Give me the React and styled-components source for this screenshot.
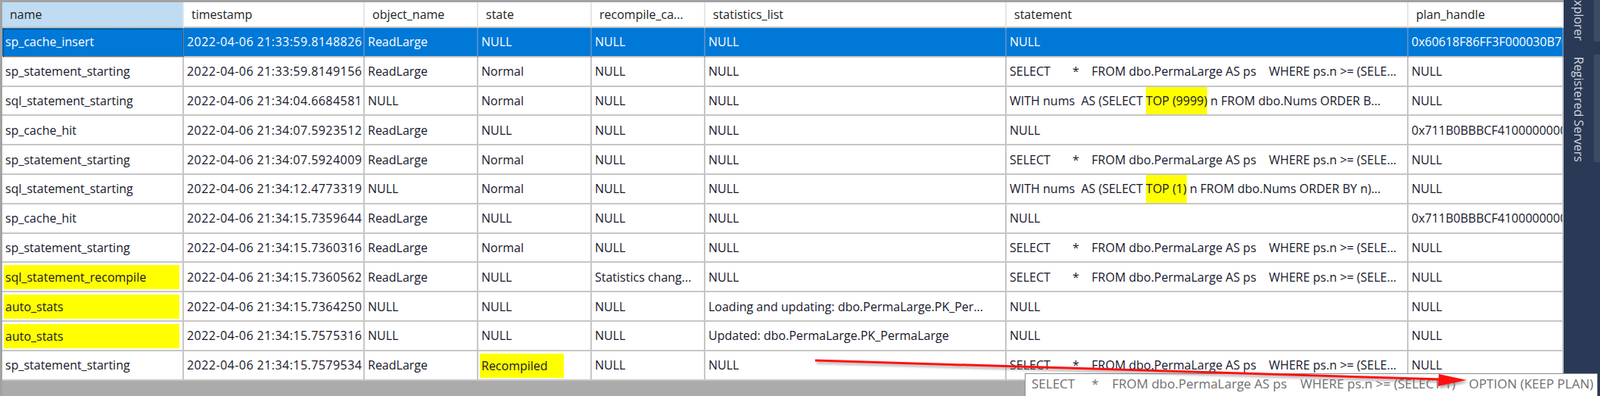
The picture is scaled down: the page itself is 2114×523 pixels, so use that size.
import React from "react";
import styled, { createGlobalStyle } from "styled-components";

const GlobalStyle = createGlobalStyle`
  html, body {
    margin: 0;
    padding: 0;
    background: #ababab;
  }
  body {
    font-family: "Open Sans", "Noto Sans", sans-serif;
  }
`;

const COLS = [240, 239, 150, 150, 150, 398, 531, null];

const Screen = styled.div`
  position: relative;
  width: 2114px;
  height: 523px;
  display: flex;
  overflow: hidden;
  background: #ababab;
`;

const GridArea = styled.div`
  flex: 1;
  min-width: 0;
  display: flex;
  flex-direction: column;
  border-top: 3px solid #a2a2a2;
  border-left: 3px solid #a2a2a2;
`;

const Table = styled.div`
  display: flex;
  flex-direction: column;
  background: #fff;
`;

const HeaderRow = styled.div`
  display: flex;
  height: 34px;
  background: #fff;
`;

const HeaderCell = styled.div`
  flex: ${(p) => (p.$w ? `0 0 ${p.$w}px` : "1 1 0")};
  min-width: 0;
  box-sizing: border-box;
  display: flex;
  align-items: center;
  padding-left: 10px;
  background: ${(p) => (p.$active ? "#bfdcf3" : "#fff")};
  border-right: 2px solid ${(p) => (p.$active ? "#d7e9f7" : "#e6e6e6")};
  border-bottom: 2px solid #c4c4c4;
  color: #1e1e1e;
  font-size: 16px;
  white-space: pre;
  overflow: hidden;
`;

const Row = styled.div`
  display: flex;
  height: 38.8px;
  background: ${(p) => (p.$selected ? "#0078d7" : "#fff")};
  color: ${(p) => (p.$selected ? "#fff" : "#17172c")};
`;

const Cell = styled.div`
  position: relative;
  flex: ${(p) => (p.$w ? `0 0 ${p.$w}px` : "1 1 0")};
  min-width: 0;
  box-sizing: border-box;
  display: flex;
  align-items: center;
  padding-left: 4px;
  border-right: 2px solid ${(p) => (p.$selected ? "#4d8cc8" : "#c6c6c6")};
  border-bottom: 2px solid #c6c6c6;
  font-size: 16px;
  letter-spacing: ${(p) => (p.$digits ? "0.45px" : "0")};
  white-space: pre;
  overflow: hidden;
  outline: ${(p) => (p.$focus ? "1px dotted #2a2010" : "none")};
  outline-offset: -2px;
`;

const Mark = styled.span`
  display: flex;
  align-items: center;
  align-self: stretch;
  margin: 3px 0 2px -2px;
  padding-left: 2px;
  background: #ffff00;
  width: ${(p) => (p.$w ? `${p.$w}px` : "auto")};
  flex: ${(p) => (p.$fill ? "1" : "none")};
  margin-right: ${(p) => (p.$fill ? "4px" : "0")};
`;

const InlineMark = styled.span`
  display: inline-block;
  background: #ffff00;
  padding: 8px 0;
`;

const SidePanel = styled.div`
  flex: 0 0 48px;
  display: flex;
  flex-direction: column;
  background: #2a3a56;
`;

const SideTab = styled.div`
  display: flex;
  justify-content: center;
  height: ${(p) => p.$h}px;
  margin-top: ${(p) => p.$gap || 0}px;
  border-right: 8px solid #3c4a63;
  padding-top: ${(p) => p.$pt || 0}px;
  box-sizing: border-box;
  overflow: hidden;
`;

const SideLabel = styled.span`
  writing-mode: vertical-rl;
  color: #d3d7df;
  font-size: 16px;
  white-space: nowrap;
`;

const Tooltip = styled.div`
  position: absolute;
  left: 1354px;
  top: 493px;
  width: 757px;
  height: 36px;
  box-sizing: border-box;
  padding: 1px 0 0 8px;
  background: #fff;
  border: 1px solid #8c8c8c;
  color: #6f6f6f;
  font-size: 17px;
  white-space: pre;
`;

const Overlay = styled.svg`
  position: absolute;
  left: 0;
  top: 0;
  pointer-events: none;
`;

const SEL = "SELECT       *    FROM dbo.PermaLarge AS ps    WHERE ps.n >= (SELE...";

const rows = [
  { name: "sp_cache_insert", ts: "2022-04-06 21:33:59.8148826", obj: "ReadLarge", state: "NULL", cause: "NULL", stats: "NULL", stmt: "NULL", plan: "0x60618F86FF3F000030B70000000000000", selected: true },
  { name: "sp_statement_starting", ts: "2022-04-06 21:33:59.8149156", obj: "ReadLarge", state: "Normal", cause: "NULL", stats: "NULL", stmt: SEL, plan: "NULL" },
  { name: "sql_statement_starting", ts: "2022-04-06 21:34:04.6684581", obj: "NULL", state: "Normal", cause: "NULL", stats: "NULL", stmt: ["WITH nums  AS (SELECT ", "TOP (9999)", " n FROM dbo.Nums ORDER B..."], plan: "NULL" },
  { name: "sp_cache_hit", ts: "2022-04-06 21:34:07.5923512", obj: "ReadLarge", state: "NULL", cause: "NULL", stats: "NULL", stmt: "NULL", plan: "0x711B0BBBCF4100000000000000" },
  { name: "sp_statement_starting", ts: "2022-04-06 21:34:07.5924009", obj: "ReadLarge", state: "Normal", cause: "NULL", stats: "NULL", stmt: SEL, plan: "NULL" },
  { name: "sql_statement_starting", ts: "2022-04-06 21:34:12.4773319", obj: "NULL", state: "Normal", cause: "NULL", stats: "NULL", stmt: ["WITH nums  AS (SELECT ", "TOP (1)", " n FROM dbo.Nums ORDER BY n)..."], plan: "NULL" },
  { name: "sp_cache_hit", ts: "2022-04-06 21:34:15.7359644", obj: "ReadLarge", state: "NULL", cause: "NULL", stats: "NULL", stmt: "NULL", plan: "0x711B0BBBCF4100000000000000" },
  { name: "sp_statement_starting", ts: "2022-04-06 21:34:15.7360316", obj: "ReadLarge", state: "Normal", cause: "NULL", stats: "NULL", stmt: SEL, plan: "NULL" },
  { name: "sql_statement_recompile", nameMark: true, ts: "2022-04-06 21:34:15.7360562", obj: "ReadLarge", state: "NULL", cause: "Statistics chang...", stats: "NULL", stmt: SEL, plan: "NULL" },
  { name: "auto_stats", nameMark: true, ts: "2022-04-06 21:34:15.7364250", obj: "NULL", state: "NULL", cause: "NULL", stats: "Loading and updating: dbo.PermaLarge.PK_Per...", stmt: "NULL", plan: "NULL" },
  { name: "auto_stats", nameMark: true, ts: "2022-04-06 21:34:15.7575316", obj: "NULL", state: "NULL", cause: "NULL", stats: "Updated: dbo.PermaLarge.PK_PermaLarge", stmt: "NULL", plan: "NULL" },
  { name: "sp_statement_starting", ts: "2022-04-06 21:34:15.7579534", obj: "ReadLarge", state: "Recompiled", stateMark: true, cause: "NULL", stats: "NULL", stmt: SEL, plan: "NULL" },
];

const headers = ["name", "timestamp", "object_name", "state", "recompile_ca...", "statistics_list", "statement", "plan_handle"];

function Statement({ value }) {
  if (!Array.isArray(value)) return value;
  return (
    <>
      {value[0]}
      <InlineMark>{value[1]}</InlineMark>
      {value[2]}
    </>
  );
}

function DataRow({ r }) {
  const sel = !!r.selected;
  return (
    <Row $selected={sel}>
      <Cell $w={COLS[0]} $selected={sel} $focus={sel}>
        {r.nameMark ? <Mark $fill>{r.name}</Mark> : r.name}
      </Cell>
      <Cell $w={COLS[1]} $selected={sel} $digits>{r.ts}</Cell>
      <Cell $w={COLS[2]} $selected={sel}>{r.obj}</Cell>
      <Cell $w={COLS[3]} $selected={sel}>
        {r.stateMark ? <Mark $w={109}>{r.state}</Mark> : r.state}
      </Cell>
      <Cell $w={COLS[4]} $selected={sel}>{r.cause}</Cell>
      <Cell $w={COLS[5]} $selected={sel}>{r.stats}</Cell>
      <Cell $w={COLS[6]} $selected={sel}>
        <Statement value={r.stmt} />
      </Cell>
      <Cell $selected={sel}>{r.plan}</Cell>
    </Row>
  );
}

function Arrow() {
  return (
    <Overlay width="2114" height="523" viewBox="0 0 2114 523">
      <defs>
        <filter id="shadow" x="-10%" y="-100%" width="120%" height="300%">
          <feGaussianBlur stdDeviation="1.5" />
        </filter>
      </defs>
      <g fill="#777" stroke="#777" opacity="0.55" filter="url(#shadow)" transform="translate(2 3)">
        <line x1="1077" y1="476" x2="1905" y2="501" strokeWidth="3" />
        <polygon points="1938,502 1901,494 1900,510" stroke="none" />
      </g>
      <line x1="1077" y1="476" x2="1905" y2="501" stroke="#ff1010" strokeWidth="3" />
      <polygon points="1938,502 1901,494 1900,510" fill="#ff1010" />
    </Overlay>
  );
}

export default function App() {
  return (
    <>
      <GlobalStyle />
      <Screen>
        <GridArea>
          <Table>
            <HeaderRow>
              {headers.map((h, i) => (
                <HeaderCell key={i} $w={COLS[i]} $active={i === 0}>
                  {h}
                </HeaderCell>
              ))}
            </HeaderRow>
            {rows.map((r, i) => (
              <DataRow key={i} r={r} />
            ))}
          </Table>
        </GridArea>
        <SidePanel>
          <SideTab $h={55}>
            <SideLabel>xplorer</SideLabel>
          </SideTab>
          <SideTab $h={142} $gap={17} $pt={3}>
            <SideLabel>Registered Servers</SideLabel>
          </SideTab>
        </SidePanel>
        <Tooltip>SELECT     *    FROM dbo.PermaLarge AS ps    WHERE ps.n &gt;= (SELECT 1)    OPTION (KEEP PLAN)</Tooltip>
        <Arrow />
      </Screen>
    </>
  );
}
